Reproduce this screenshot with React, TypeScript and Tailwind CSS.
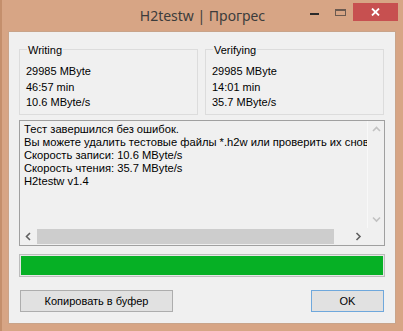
import React from "react";

const ui = { fontFamily: '"Liberation Sans", Arial, sans-serif' };
const title = { fontFamily: '"Noto Sans", "Open Sans", sans-serif' };

type GroupProps = {
  label: string;
  lines: string[];
};

function Group({ label, lines }: GroupProps) {
  return (
    <div className="relative h-[66px] flex-1 border border-[#dcdcdc] pl-[6px] pt-[14px]">
      <span className="absolute left-[7px] top-[-6px] bg-[#f0f0f0] px-[1px] text-[11px] leading-[13px]">
        {label}
      </span>
      {lines.map((l) => (
        <div key={l} className="text-[11px] leading-[15.5px] text-black">
          {l}
        </div>
      ))}
    </div>
  );
}

function Chevron({ dir, light }: { dir: "up" | "down" | "left" | "right"; light?: boolean }) {
  const pts = {
    up: "1,5 4.5,1.5 8,5",
    down: "1,1.5 4.5,5 8,1.5",
    left: "5,1 1.5,4.5 5,8",
    right: "1.5,1 5,4.5 1.5,8",
  }[dir];
  const horiz = dir === "left" || dir === "right";
  return (
    <svg width={horiz ? 7 : 9} height={horiz ? 9 : 7} viewBox={horiz ? "0 0 7 9" : "0 0 9 7"}>
      <polyline
        points={pts}
        fill="none"
        stroke={light ? "#c2c2c2" : "#606060"}
        strokeWidth="1.6"
      />
    </svg>
  );
}

function Memo() {
  const text = [
    "Тест завершился без ошибок.",
    "Вы можете удалить тестовые файлы *.h2w или проверить их снова.",
    "Скорость записи: 10.6 MByte/s",
    "Скорость чтения: 35.7 MByte/s",
    "H2testw v1.4",
  ];
  return (
    <div className="mt-[5px] flex h-[126px] flex-col border border-[#a0a0a0] bg-[#f0f0f0]">
      <div className="flex min-h-0 flex-1">
        <div className="min-w-0 flex-1 overflow-hidden whitespace-nowrap pl-[4px] pt-[2px] text-[11.2px] leading-[13px] text-black">
          {text.map((t) => (
            <div key={t}>{t}</div>
          ))}
        </div>
        <div className="flex w-[17px] shrink-0 flex-col items-center justify-between border-l border-[#f8f8f8] py-[5px]">
          <Chevron dir="up" light />
          <Chevron dir="down" light />
        </div>
      </div>
      <div className="flex h-[17px]">
        <div className="flex flex-1 items-center">
          <div className="flex w-[17px] justify-center">
            <Chevron dir="left" />
          </div>
          <div className="h-[15px] w-[297px] bg-[#cdcdcd]" />
          <div className="flex-1" />
          <div className="flex w-[17px] justify-center">
            <Chevron dir="right" />
          </div>
        </div>
        <div className="w-[17px] bg-[#f0f0f0]" />
      </div>
    </div>
  );
}

export default function App() {
  return (
    <div
      className="flex h-[331px] w-[403px] flex-col border-l-2 border-[#c48f6c] bg-[#d7a585]"
      style={ui}
    >
      <div className="relative flex h-[31px] shrink-0 items-start justify-center">
        <span className="mt-[5px] text-[14px] leading-[22px] text-[#3c3c3c]" style={title}>
          H2testw | Прогрес
        </span>
        <div className="absolute right-[5px] top-[3px] flex items-start">
          <div className="flex h-[18px] w-[26px] items-center justify-center">
            <div className="mt-[4px] h-[2px] w-[9px] bg-[#2a2a2a]" />
          </div>
          <div className="flex h-[18px] w-[26px] items-center justify-center">
            <div className="h-[7px] w-[11px] border border-t-2 border-[#6b5a50]" />
          </div>
          <div className="flex h-[18px] w-[45px] items-center justify-center bg-[#c75050]">
            <svg width="9" height="8" viewBox="0 0 9 8">
              <path d="M1 0.5 L8 7.5 M8 0.5 L1 7.5" stroke="#fff" strokeWidth="1.8" />
            </svg>
          </div>
        </div>
      </div>
      <div className="mb-[7px] ml-[6px] mr-[7px] flex flex-1 flex-col border border-[#c9a48a] bg-[#f0f0f0] px-[10px] pt-[17px]">
        <div className="flex gap-[7px] pr-[1px]">
          <Group label="Writing" lines={["29985 MByte", "46:57 min", "10.6 MByte/s"]} />
          <Group label="Verifying" lines={["29985 MByte", "14:01 min", "35.7 MByte/s"]} />
        </div>
        <Memo />
        <div className="mt-[8px] h-[23px] border border-[#bcbcbc] bg-[#e6e6e6] p-[1px]">
          <div className="h-full w-full bg-[#06b025]" />
        </div>
        <div className="mt-[13px] flex justify-between pl-[1px] pr-[1px]">
          <button className="h-[22px] w-[153px] border border-[#adadad] bg-[#e1e1e1] text-[11px] text-black">
            Копировать в буфер
          </button>
          <button className="h-[22px] w-[73px] border border-[#6fa8dc] bg-[#e1e1e1] text-[11px] text-black">
            OK
          </button>
        </div>
      </div>
    </div>
  );
}
